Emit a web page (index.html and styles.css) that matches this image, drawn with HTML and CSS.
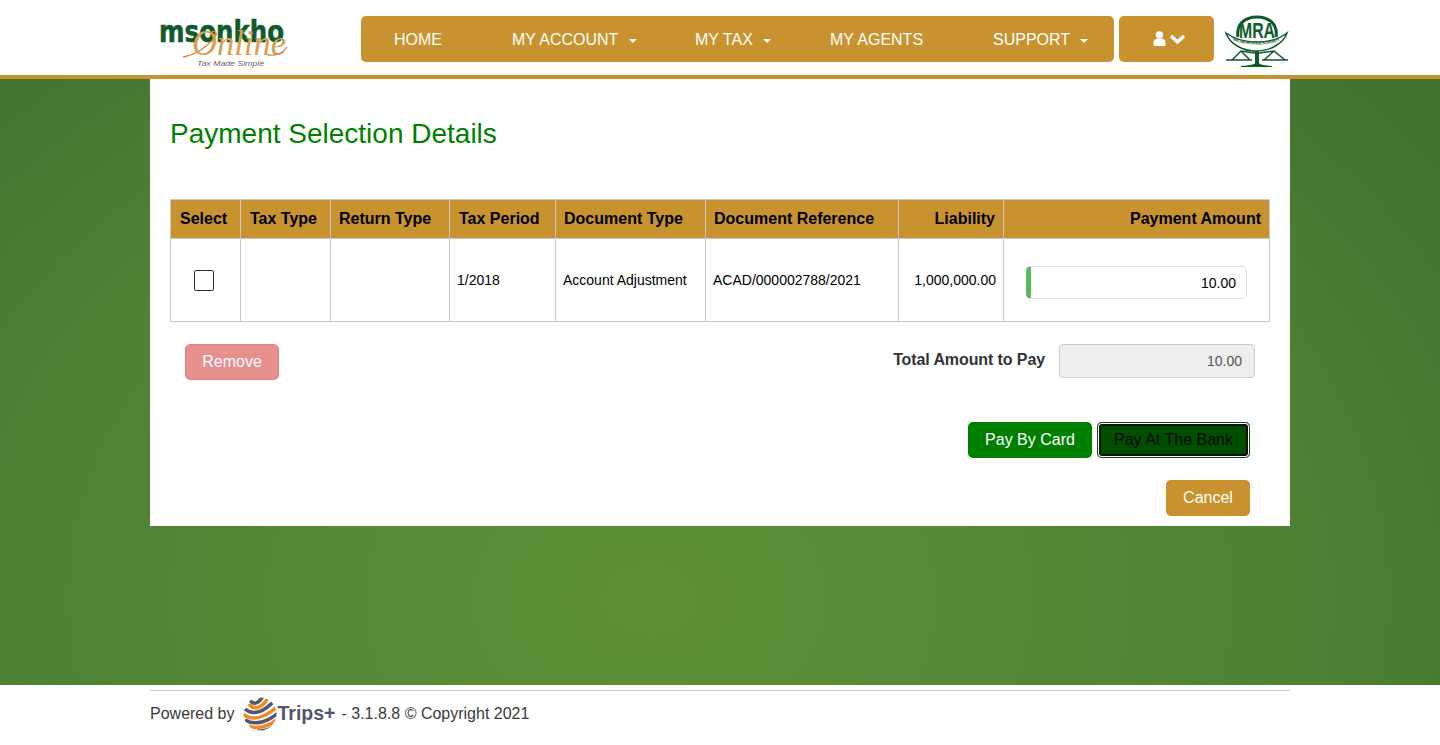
FILE: index.html
```html
<!DOCTYPE html>
<html>
  <head>
    <title>Payment Selection Details</title>
    <link rel="stylesheet" href="styles.css">
  </head>
  <body>
    <header>
      <div class="wrap top-bar">
        <a class="logo" href="#">
          <svg width="140" height="54" viewBox="0 0 140 54">
            <text class="logo-main" x="9" y="27" textLength="125" lengthAdjust="spacingAndGlyphs">msonkho</text>
            <path class="logo-swirl" d="M33 42C46 40 60 30 66 20C67 17 64 16 61 17" />
            <text class="logo-script" x="42" y="40" textLength="94" lengthAdjust="spacingAndGlyphs">Online</text>
            <path class="logo-tail" d="M118 40C126 41 133 38 137 32" />
            <text class="logo-tag" x="47" y="51" textLength="67" lengthAdjust="spacingAndGlyphs">Tax Made Simple</text>
          </svg>
        </a>
        <nav class="main-nav">
          <a href="#">HOME</a>
          <a href="#">MY ACCOUNT <span class="caret"></span></a>
          <a href="#">MY TAX <span class="caret"></span></a>
          <a href="#">MY AGENTS</a>
          <a href="#">SUPPORT <span class="caret"></span></a>
        </nav>
        <a class="user-menu" href="#">
          <svg width="36" height="16" viewBox="0 0 36 16">
            <circle class="icon-fill" cx="6.500" cy="4" r="3.700" />
            <path class="icon-fill" d="M0.500 15V11.500C0.500 9 2.300 7.800 4 7.800H9C10.700 7.800 12.500 9 12.500 11.500V15Z" />
            <path class="icon-chevron" d="M18 5L24.500 11L31 5" />
          </svg>
        </a>
        <a class="mra-logo" href="#">
          <svg width="66" height="54" viewBox="0 0 66 54">
            <path class="mra-arch" d="M14 23C12 10 21 3 33 3C45 3 54 10 52 23" />
            <text class="mra-text" x="33" y="24" textLength="36" lengthAdjust="spacingAndGlyphs">MRA</text>
            <path class="mra-line" d="M2 19C13 27 24 28 32 28C42 28 53 27 63 19C59 31 44 37 32 37C20 37 6 31 2 19Z" />
            <path id="mra-band" class="mra-none" d="M9 26C18 32 46 32 57 26" />
            <text class="mra-small"><textPath href="#mra-band" textLength="48">MALAWI REVENUE AUTHORITY</textPath></text>
            <path class="mra-line" d="M8 46L17 37L26 46H8ZM40 46L50 37L61 46H40ZM17 37L31 39M35 39L50 37M2 46H28M38 46H64" />
            <path class="mra-fill" d="M31 37H35V49C35 50 38 51 48 52V53H17V52C28 51 31 50 31 49Z" />
          </svg>
        </a>
      </div>
    </header>

    <main>
      <div class="wrap panel">
        <h2>Payment Selection Details</h2>

        <table class="payment-table">
          <thead>
            <tr>
              <th class="col-select nudge">Select</th>
              <th class="col-type nudge">Tax Type</th>
              <th class="col-return">Return Type</th>
              <th class="col-period nudge">Tax Period</th>
              <th class="col-doc">Document Type</th>
              <th class="col-ref">Document Reference</th>
              <th class="col-liability num">Liability</th>
              <th class="num">Payment Amount</th>
            </tr>
          </thead>
          <tbody>
            <tr>
              <td><input class="select-box" type="checkbox" /></td>
              <td></td>
              <td></td>
              <td>1/2018</td>
              <td>Account Adjustment</td>
              <td>ACAD/000002788/2021</td>
              <td class="num">1,000,000.00</td>
              <td><input class="amount-input" value="10.00" /></td>
            </tr>
          </tbody>
        </table>

        <div class="total-row">
          <button class="btn btn-remove">Remove</button>
          <div class="total">
            <label>Total Amount to Pay</label>
            <input class="total-input" value="10.00" disabled />
          </div>
        </div>

        <div class="pay-row">
          <button class="btn btn-green">Pay By Card</button>
          <button class="btn btn-bank">Pay At The Bank</button>
        </div>

        <div class="cancel-row">
          <button class="btn btn-gold">Cancel</button>
        </div>
      </div>
    </main>

    <footer>
      <div class="wrap footer-line">
        <span>Powered by</span>
        <span class="trips">
          <svg width="34" height="36" viewBox="0 0 34 36">
            <clipPath id="globe-clip"><circle cx="17" cy="18" r="16.500" /></clipPath>
            <g class="globe-lines" clip-path="url(#globe-clip)">
              <path class="stripe-dark" d="M6 3C10 9 15 9 20 0" />
              <path class="stripe-orange" d="M6 8C11 15 19 12 25 2" />
              <path class="stripe-dark" d="M2 13C10 20 21 16 31 5" />
              <path class="stripe-orange" d="M0 18C10 26 23 21 35 10" />
              <path class="stripe-dark" d="M2 24C12 30 25 26 36 16" />
              <path class="stripe-orange" d="M6 30C15 34 27 30 36 22" />
              <path class="stripe-dark" d="M14 35C22 36 30 32 36 27" />
            </g>
          </svg>
          <b>Trips+</b>
        </span>
        <span>- 3.1.8.8 © Copyright 2021</span>
      </div>
    </footer>
  </body>
</html>
```

FILE: styles.css
```css
:root {
  --gold: #c8932e;
  --green: #008000;
  --dark-green: #0f5a2b;
  --cell-border: #c8c8c8;
}

* {
  box-sizing: border-box;
}

body {
  margin: 0;
  font-family: "Liberation Sans", Arial, sans-serif;
  font-size: 16px;
  color: #333;
  background: #fff;
}

.wrap {
  width: 1140px;
  margin: 0 auto;
}

/* header */
header {
  height: 79px;
  border-bottom: 4px solid var(--gold);
  background: #fff;
}

.top-bar {
  display: flex;
  align-items: flex-start;
  padding-top: 16px;
}

.logo {
  width: 211px;
  margin-top: -1px;
}

.logo-main {
  font-family: "DejaVu Sans", sans-serif;
  font-weight: bold;
  font-size: 31px;
  fill: var(--dark-green);
  stroke: var(--dark-green);
  stroke-width: 0.600;
}

.logo-script {
  font-family: "Liberation Serif", serif;
  font-style: italic;
  font-size: 35px;
  fill: #d9a04f;
}

.logo-swirl,
.logo-tail {
  fill: none;
  stroke: #d4833a;
  stroke-width: 1.300;
}

.logo-tag {
  font-family: "Liberation Sans", sans-serif;
  font-style: italic;
  font-size: 8px;
  fill: #666;
}

.main-nav {
  display: flex;
  width: 753px;
  height: 46px;
  padding-left: 33px;
  border-radius: 5px;
  background: var(--gold);
}

.main-nav a {
  display: block;
  flex: none;
  padding-top: 1px;
  line-height: 46px;
  color: #fff;
  text-decoration: none;
}

.main-nav a:nth-child(1) { width: 118px; }
.main-nav a:nth-child(2) { width: 183px; }
.main-nav a:nth-child(3) { width: 135px; }
.main-nav a:nth-child(4) { width: 163px; }
.main-nav a:nth-child(5) { width: 100px; }

.caret {
  display: inline-block;
  width: 0;
  height: 0;
  margin-left: 6px;
  vertical-align: middle;
  border-top: 4px solid #fff;
  border-left: 4px solid transparent;
  border-right: 4px solid transparent;
}

.user-menu {
  display: flex;
  align-items: center;
  justify-content: center;
  width: 95px;
  height: 46px;
  margin-left: 5px;
  padding-left: 8px;
  border-radius: 5px;
  background: var(--gold);
}

.icon-fill {
  fill: #fff;
}

.icon-chevron {
  fill: none;
  stroke: #fff;
  stroke-width: 3.400;
}

.mra-logo {
  width: 66px;
  height: 54px;
  margin-left: 10px;
  margin-top: -2px;
}

.mra-text {
  font-family: "Liberation Sans", sans-serif;
  font-weight: bold;
  font-size: 22px;
  text-anchor: middle;
  fill: var(--dark-green);
}

.mra-arch {
  fill: none;
  stroke: var(--dark-green);
  stroke-width: 3;
}

.mra-line {
  fill: none;
  stroke: var(--dark-green);
  stroke-width: 1.500;
}

.mra-none {
  fill: none;
}

.mra-small {
  font-family: "Liberation Sans", sans-serif;
  font-weight: bold;
  font-size: 3.500px;
  fill: var(--dark-green);
}

.mra-fill {
  fill: var(--dark-green);
}

/* page body */
main {
  height: 606px;
  background: radial-gradient(ellipse 1000px 760px at 650px 520px, #5f9038 0%, #4f8135 65%, #41722f 100%);
}

.panel {
  height: 447px;
  padding: 40px 20px 0;
  background: #fff;
}

h2 {
  margin: 0 0 50px;
  font-size: 28px;
  font-weight: normal;
  line-height: 30px;
  color: var(--green);
}

.payment-table {
  width: 1100px;
  table-layout: fixed;
  border-collapse: collapse;
}

.payment-table th,
.payment-table td {
  border: 1px solid var(--cell-border);
  padding: 0 7px;
  text-align: left;
}

.payment-table th {
  height: 39px;
  padding: 0 8px;
  font-size: 16px;
  color: #000;
  background: var(--gold);
}

.payment-table th.nudge {
  padding-left: 9px;
}

.payment-table td {
  height: 83px;
  font-size: 14px;
  color: #000;
}

.payment-table .num {
  text-align: right;
}

.col-select { width: 70px; }
.col-type { width: 90px; }
.col-return { width: 119px; }
.col-period { width: 106px; }
.col-doc { width: 150px; }
.col-ref { width: 193px; }
.col-liability { width: 105px; }

.select-box {
  appearance: none;
  display: block;
  width: 20px;
  height: 21px;
  margin: 0 0 0 16px;
  border: 1px solid #333;
  border-radius: 2px;
  background: #fff;
}

.amount-input {
  display: block;
  width: 221px;
  height: 33px;
  margin: 4px 0 0 15px;
  padding: 1px 10px 0;
  border: 1px solid #ddd;
  border-left: 5px solid #5cb85c;
  border-radius: 5px;
  font: 14px "Liberation Sans", sans-serif;
  color: #000;
  text-align: right;
}

.btn {
  height: 36px;
  padding: 0 17px;
  border: 0;
  border-radius: 5px;
  font: 16px "Liberation Sans", sans-serif;
  color: #fff;
}

.total-row {
  display: flex;
  justify-content: space-between;
  align-items: flex-start;
  padding: 22px 15px 0;
}

.btn-remove {
  width: 94px;
  padding: 0;
  border: 1px solid #e08585;
  background: #e58f8f;
}

.total {
  display: flex;
  align-items: center;
  gap: 14px;
}

.total label {
  margin-top: -3px;
  font-weight: bold;
  letter-spacing: -0.1px;
}

.total-input {
  width: 196px;
  height: 34px;
  padding: 0 12px;
  border: 1px solid #ccc;
  border-radius: 4px;
  font: 14px "Liberation Sans", sans-serif;
  color: #555;
  text-align: right;
  background: #eee;
  opacity: 1;
}

.pay-row {
  display: flex;
  justify-content: flex-end;
  gap: 5px;
  padding: 42px 20px 0 0;
}

.btn-green {
  width: 124px;
  padding: 0;
  background: var(--green);
}

.btn-bank {
  width: 153px;
  padding: 0;
  color: #0a0a0a;
  background: #004d00;
  box-shadow: inset 0 0 0 1px #0b4d0b, inset 0 0 0 2px #fff, inset 0 0 0 4px #111;
}

.cancel-row {
  display: flex;
  justify-content: flex-end;
  padding: 22px 20px 0 0;
}

.btn-gold {
  width: 84px;
  padding: 0;
  background: var(--gold);
}

/* footer */
footer {
  height: 60px;
  padding-top: 5px;
  background: #fff;
}

.footer-line {
  display: flex;
  align-items: center;
  height: 46px;
  border-top: 1px solid #ccc;
  color: #3a3a3a;
}

.trips {
  display: flex;
  align-items: center;
  margin: 0 6px 0 8px;
}

.trips b {
  margin-left: 1px;
  font-size: 19.500px;
  color: #55556f;
}

.globe-lines {
  fill: none;
  stroke-width: 3.500;
}

.stripe-dark {
  stroke: #55556f;
}

.stripe-orange {
  stroke: #ef8b22;
}
```
